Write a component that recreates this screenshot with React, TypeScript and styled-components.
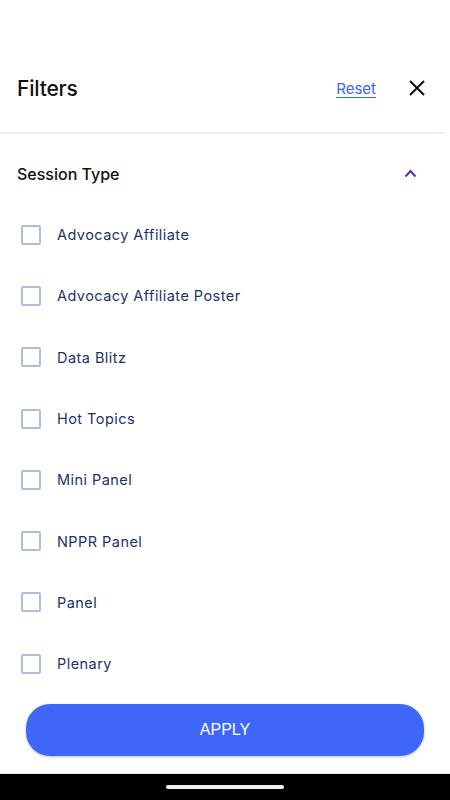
import styled, { createGlobalStyle } from "styled-components";

const GlobalStyle = createGlobalStyle`
  html, body {
    margin: 0;
    padding: 0;
    background: #ffffff;
  }
  body {
    font-family: "Inter", "Liberation Sans", sans-serif;
  }
`;

const Screen = styled.div`
  width: 450px;
  height: 800px;
  display: flex;
  flex-direction: column;
  background: #ffffff;
  overflow: hidden;
`;

const Header = styled.div`
  height: 132px;
  box-sizing: border-box;
  padding: 44px 24px 0 17px;
  display: flex;
  align-items: center;
`;

const Title = styled.div`
  font-size: 21px;
  font-weight: 500;
  color: #111111;
  letter-spacing: -0.2px;
  flex: 1;
`;

const ResetLink = styled.a`
  font-size: 15px;
  color: #3d64f5;
  text-decoration: underline;
  text-underline-offset: 3px;
  margin-right: 32px;
`;

const CloseBtn = styled.div`
  width: 18px;
  height: 18px;
  display: flex;
  align-items: center;
  justify-content: center;
`;

const Divider = styled.div`
  width: 444px;
  height: 2px;
  background: #e6eef8;
`;

const SectionHead = styled.div`
  height: 70px;
  box-sizing: border-box;
  padding: 9px 33px 0 17px;
  display: flex;
  align-items: center;
`;

const SectionTitle = styled.div`
  font-size: 16px;
  font-weight: 500;
  color: #111111;
  flex: 1;
`;

const List = styled.div`
  flex: 1;
  display: flex;
  flex-direction: column;
  padding-left: 21px;
`;

const Row = styled.div`
  height: 61.3px;
  display: flex;
  align-items: center;
  flex-shrink: 0;
`;

const Box = styled.div`
  width: 16px;
  height: 16px;
  border: 2px solid #a9c0e3;
  border-radius: 2px;
  margin-right: 16px;
`;

const Label = styled.div`
  font-size: 14.5px;
  color: #1d3366;
  letter-spacing: 0.45px;
`;

const Footer = styled.div`
  padding: 0 26px 17px;
`;

const ApplyBtn = styled.button`
  width: 398px;
  height: 52px;
  border: none;
  border-radius: 24px;
  background: #3e66f8;
  color: #ffffff;
  font-family: "Liberation Sans", Arial, sans-serif;
  font-size: 16px;
  box-shadow: 0 1px 3px rgba(0, 0, 0, 0.25);
`;

const NavBar = styled.div`
  height: 26px;
  background: #000000;
  display: flex;
  align-items: center;
  justify-content: center;
  border-top: 1px solid #e8e8e8;
`;

const HomePill = styled.div`
  width: 118px;
  height: 4px;
  border-radius: 2px;
  background: #f0f0f0;
`;

const items = [
  "Advocacy Affiliate",
  "Advocacy Affiliate Poster",
  "Data Blitz",
  "Hot Topics",
  "Mini Panel",
  "NPPR Panel",
  "Panel",
  "Plenary",
];

export default function App() {
  return (
    <Screen>
      <GlobalStyle />
      <Header>
        <Title>Filters</Title>
        <ResetLink>Reset</ResetLink>
        <CloseBtn>
          <svg width="16" height="16" viewBox="0 0 16 16">
            <path d="M1 1L15 15M15 1L1 15" stroke="#111" strokeWidth="2" />
          </svg>
        </CloseBtn>
      </Header>
      <Divider />
      <SectionHead>
        <SectionTitle>Session Type</SectionTitle>
        <svg width="13" height="9" viewBox="0 0 13 9">
          <path d="M1.5 7.5L6.5 2L11.5 7.5" stroke="#5a2dbf" strokeWidth="2" fill="none" />
        </svg>
      </SectionHead>
      <List>
        {items.map((it) => (
          <Row key={it}>
            <Box />
            <Label>{it}</Label>
          </Row>
        ))}
      </List>
      <Footer>
        <ApplyBtn>APPLY</ApplyBtn>
      </Footer>
      <NavBar>
        <HomePill />
      </NavBar>
    </Screen>
  );
}
